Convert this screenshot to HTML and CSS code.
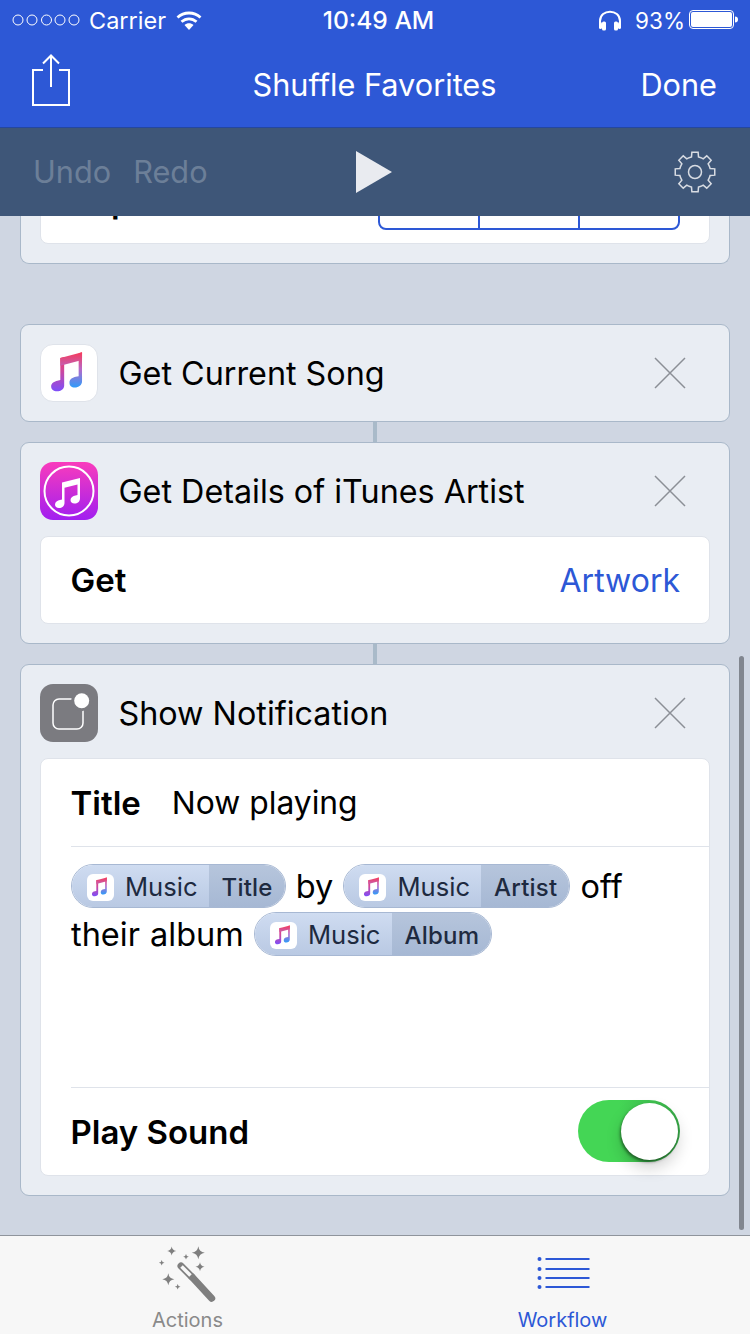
FILE: index.html
```html
<!DOCTYPE html>
<html lang="en">
<head>
<meta charset="utf-8">
<title>Shuffle Favorites</title>
<link rel="stylesheet" href="styles.css">
</head>
<body>
<svg class="defs" width="0" height="0" aria-hidden="true">
  <defs>
    <linearGradient id="noteLeft" gradientUnits="userSpaceOnUse" x1="0" y1="8" x2="0" y2="48"><stop offset="0" stop-color="#fc3650"/><stop offset=".45" stop-color="#d0479a"/><stop offset="1" stop-color="#7d4ffa"/></linearGradient>
    <linearGradient id="noteRight" gradientUnits="userSpaceOnUse" x1="0" y1="6" x2="0" y2="44"><stop offset="0" stop-color="#fc3650"/><stop offset=".5" stop-color="#b868c8"/><stop offset="1" stop-color="#2f9cfa"/></linearGradient>
    <linearGradient id="storeBg" x1="0" y1="0" x2="0" y2="1"><stop offset="0" stop-color="#f93cbc"/><stop offset="1" stop-color="#a11ff0"/></linearGradient>
    <symbol id="note" viewBox="0 0 58 58">
      <path fill="url(#noteLeft)" d="M20 13.5 L24 12.5 V42 C24 46 20.500 48 16.500 48 C13 48 10.500 46 10.500 43 C10.500 39.500 14 37.500 17 37 L20 36.300 Z"/>
      <path fill="url(#noteRight)" d="M39 8.500 L42.500 7.500 V37.500 C42.500 41.500 39 44 35 44 C31.500 44 29.500 41.800 29.500 39 C29.500 35.500 33 33.500 36 33 L39 32.300 Z"/>
      <path fill="url(#noteRight)" d="M20 13.500 L42.500 7.500 V15.500 L20 21.500 Z"/>
    </symbol>
    <path id="star" d="M0 -1 Q.12 -.12 1 0 Q.12 .12 0 1 Q-.12 .12 -1 0 Q-.12 -.12 0 -1 Z"/>
    <path id="tooth" d="M-5.930 -14.320 L-3.490 -15.100 L-3.130 -19.750 H3.130 L3.490 -15.100 L5.930 -14.320"/>
  </defs>
</svg>

<div class="phone">
  <header class="top">
    <div class="status">
      <div class="status-side">
        <svg class="dots" width="68" height="12" viewBox="0 0 68 12"><g fill="none" stroke="#fff" stroke-width="1"><circle cx="6" cy="6" r="5"/><circle cx="20" cy="6" r="5"/><circle cx="34.500" cy="6" r="5"/><circle cx="48" cy="6" r="5"/><circle cx="62" cy="6" r="5"/></g></svg>
        <span class="carrier">Carrier</span>
        <svg class="wifi" width="26" height="19" viewBox="0 0 26 19"><g fill="none" stroke="#fff" stroke-width="2.800"><path d="M1.500 6.500 C8 .5 18 .5 24.500 6.500"/><path d="M5.500 10.800 C10 6.800 16 6.800 20.500 10.800"/></g><path fill="#fff" d="M8.500 14 C11 11.800 15 11.800 17.500 14 L13 19 Z"/></svg>
      </div>
      <div class="time">10:49 AM</div>
      <div class="status-side status-right">
        <svg class="phones" width="24" height="21" viewBox="0 0 24 21"><path fill="none" stroke="#fff" stroke-width="2" d="M2 17 V11 C2 -1.500 22 -1.500 22 11 V17"/><rect x="4" y="11.500" width="4" height="9" rx="1.500" fill="#fff"/><rect x="16" y="11.500" width="4" height="9" rx="1.500" fill="#fff"/><rect x="1" y="12" width="3" height="7" rx="1.500" fill="#fff"/><rect x="20" y="12" width="3" height="7" rx="1.500" fill="#fff"/></svg>
        <span class="battery-text">93%</span>
        <svg class="battery" width="50" height="20" viewBox="0 0 50 20"><rect x=".5" y=".5" width="44" height="18" rx="3.500" fill="none" stroke="#fff"/><rect x="2" y="2" width="41" height="15" rx="2" fill="#fff"/><path fill="#fff" d="M46 6.500 C48 6.500 49 7.500 49 9.500 C49 11.500 48 12.500 46 12.500 Z"/></svg>
      </div>
    </div>
    <nav class="nav">
      <svg class="share" width="38" height="53" viewBox="0 0 38 53"><g fill="none" stroke="#fff" stroke-width="2"><path d="M11 16 H1 V51 H37 V16 H27"/><path d="M19 1.500 V33"/><path d="M11 9.500 L19 1.500 L27 9.500"/></g></svg>
      <div class="nav-title">Shuffle Favorites</div>
      <div class="nav-done">Done</div>
    </nav>
  </header>

  <div class="toolbar">
    <div class="history"><span>Undo</span><span>Redo</span></div>
    <svg class="play" width="36" height="42" viewBox="0 0 36 42"><path fill="#e9ebf0" d="M0 0 L36 21 L0 42 Z"/></svg>
    <svg class="gear" width="42" height="42" viewBox="-21 -21 42 42">
      <g fill="none" stroke="#d8dce3" stroke-width="1.500">
        <circle r="6.500"/>
        <use href="#tooth"/><use href="#tooth" transform="rotate(45)"/><use href="#tooth" transform="rotate(90)"/><use href="#tooth" transform="rotate(135)"/><use href="#tooth" transform="rotate(180)"/><use href="#tooth" transform="rotate(225)"/><use href="#tooth" transform="rotate(270)"/><use href="#tooth" transform="rotate(315)"/>
      </g>
    </svg>
  </div>

  <main class="scroll">
    <div class="flow">
      <section class="card card-clipped">
        <div class="panel">
          <div class="row row-clipped">
            <span class="label">Repeat</span>
            <div class="segments"><i></i><i></i><i></i></div>
          </div>
        </div>
      </section>

      <section class="card card-song">
        <header class="card-head">
          <svg class="app-icon app-music" viewBox="0 0 58 58"><use href="#note"/></svg>
          <h2>Get Current Song</h2>
          <svg class="close" width="32" height="32" viewBox="0 0 32 32"><path d="M1 1 L31 31 M31 1 L1 31"/></svg>
        </header>
      </section>
      <div class="link"></div>

      <section class="card">
        <header class="card-head">
          <svg class="app-icon" viewBox="0 0 58 58"><rect width="58" height="58" rx="13" fill="url(#storeBg)"/><circle cx="29" cy="29" r="24.500" fill="none" stroke="#fff" stroke-width="2"/><path fill="#fff" d="M22 20.500 L40 16 V36.500 C40 39.500 37.500 41.500 34.500 41.500 C32 41.500 30.500 40 30.500 38 C30.500 35.500 33 34 35.500 33.500 L37.500 33 V22.500 L24.500 25.800 V41 C24.500 44 22 46 19 46 C16.500 46 15 44.500 15 42.500 C15 40 17.500 38.500 20 38 L22 37.500 Z"/></svg>
          <h2>Get Details of iTunes Artist</h2>
          <svg class="close" width="32" height="32" viewBox="0 0 32 32"><path d="M1 1 L31 31 M31 1 L1 31"/></svg>
        </header>
        <div class="panel">
          <div class="row">
            <span class="label">Get</span>
            <span class="value">Artwork</span>
          </div>
        </div>
      </section>
      <div class="link"></div>

      <section class="card">
        <header class="card-head">
          <svg class="app-icon" viewBox="0 0 58 58"><rect width="58" height="58" rx="13" fill="#7b7b80"/><rect x="13" y="15" width="30" height="30" rx="6" fill="none" stroke="#fff" stroke-width="1.500"/><circle cx="41.700" cy="16.700" r="10.500" fill="#7b7b80"/><circle cx="41.700" cy="16.700" r="7.500" fill="#fff"/></svg>
          <h2>Show Notification</h2>
          <svg class="close" width="32" height="32" viewBox="0 0 32 32"><path d="M1 1 L31 31 M31 1 L1 31"/></svg>
        </header>
        <div class="panel">
          <div class="row row-title">
            <span class="label">Title</span>
            <span class="text">Now playing</span>
          </div>
          <div class="body-text">
            <span class="pill"><span class="pill-app"><svg class="pill-icon" viewBox="0 0 58 58"><use href="#note"/></svg>Music</span><span class="pill-prop">Title</span></span> by <span class="pill"><span class="pill-app"><svg class="pill-icon" viewBox="0 0 58 58"><use href="#note"/></svg>Music</span><span class="pill-prop">Artist</span></span> off their album <span class="pill"><span class="pill-app"><svg class="pill-icon" viewBox="0 0 58 58"><use href="#note"/></svg>Music</span><span class="pill-prop">Album</span></span>
          </div>
          <div class="row row-sound">
            <span class="label">Play Sound</span>
            <div class="toggle"><div class="knob"></div></div>
          </div>
        </div>
      </section>
    </div>
    <div class="scrollbar"></div>
  </main>

  <footer class="tabs">
    <div class="tab">
      <svg class="tab-icon" width="60" height="60" viewBox="0 0 60 60">
        <g fill="#7f7f7f">
          <use href="#star" transform="translate(13.700 7) scale(4.500)"/>
          <use href="#star" transform="translate(40.300 8.700) scale(6.500)"/>
          <use href="#star" transform="translate(28 12.700) scale(2.800)"/>
          <use href="#star" transform="translate(3.700 18.700) scale(2.800)"/>
          <use href="#star" transform="translate(42 22.700) scale(4.500)"/>
          <use href="#star" transform="translate(10.300 35.300) scale(6)"/>
          <use href="#star" transform="translate(19.700 42.700) scale(2.800)"/>
        </g>
        <path d="M33.700 32.700 L53.700 54.300" stroke="#7f7f7f" stroke-width="7" stroke-linecap="round"/>
        <path d="M23 22 L33.700 32.700" stroke="#7f7f7f" stroke-width="7" stroke-linecap="round"/>
        <path d="M23.500 22.500 L32.500 31.500" stroke="#f7f7f7" stroke-width="3.500"/>
      </svg>
      <span class="tab-label">Actions</span>
    </div>
    <div class="tab tab-active">
      <svg class="tab-icon" width="60" height="60" viewBox="0 0 60 60">
        <g fill="#2d58d6"><circle cx="6.500" cy="15" r="2"/><circle cx="6.500" cy="25" r="2"/><circle cx="6.500" cy="34" r="2"/><circle cx="6.500" cy="43" r="2"/></g>
        <path d="M12.500 15 H56.500 M12.500 25 H56.500 M12.500 34 H56.500 M12.500 43 H56.500" stroke="#2d58d6" stroke-width="2"/>
      </svg>
      <span class="tab-label">Workflow</span>
    </div>
  </footer>
</div>
</body>
</html>
```

FILE: styles.css
```css
* { box-sizing: border-box; }
html, body { margin: 0; padding: 0; }
body { font-family: Inter, "Liberation Sans", sans-serif; color: #000; background: #cfd6e2; }
.defs { display: block; height: 0; }
.phone { width: 750px; height: 1334px; display: flex; flex-direction: column; overflow: hidden; }

.top { background: #2d58d6; color: #fff; border-bottom: 1px solid #24479f; height: 128px; flex: none; }
.status { height: 40px; display: grid; grid-template-columns: 1fr auto 1fr; align-items: center; font-size: 24.600px; padding: 0 11px 0 12px; }
.status-side { display: flex; align-items: center; }
.status-right { justify-content: flex-end; }
.carrier { margin-left: 9px; font-size: 23.500px; }
.wifi { margin-left: 10px; }
.time { font-weight: 500; margin-left: 6px; }
.battery-text { margin-left: 13px; font-size: 22.500px; }
.battery { margin-left: 4px; }
.nav { height: 87px; display: grid; grid-template-columns: 1fr auto 1fr; align-items: center; padding: 2px 33px 0 32px; font-size: 30.700px; }
.share { margin-top: -8px; }
.nav-done { justify-self: end; }

.toolbar { height: 88px; flex: none; background: #3e5678; display: flex; align-items: center; justify-content: space-between; padding: 0 34px; position: relative; }
.history { display: flex; gap: 22px; font-size: 30.700px; color: #6c7f98; margin: -2px 0 0 -1px; }
.play { position: absolute; left: 356px; top: 23px; }

.scroll { flex: 1; min-height: 0; overflow: hidden; position: relative; }
.flow { padding: 0 20px; margin-top: -59px; }
.card { background: #e9edf3; border: 1px solid #a9b8c9; border-radius: 9px; padding: 0 19px 19px; }
.card-clipped { margin-bottom: 60px; border-top: 0; }
.card-song { padding-bottom: 0; }
.card-head { height: 93px; padding-top: 3px; display: flex; align-items: center; }
.card-song .card-head { height: 96px; padding-top: 0; }
.app-icon { width: 58px; height: 58px; flex: none; }
.app-music { background: #fff; border: 1px solid #dfe3ea; border-radius: 13px; }
h2 { margin: 0 0 0 20.500px; font-size: 32.300px; font-weight: 400; flex: 1; }
.close { fill: none; stroke: #8b8f96; stroke-width: 1.500; margin-right: 24px; flex: none; }
.link { width: 4px; height: 20px; background: #a9bac9; margin: 0 auto; }

.panel { background: #fff; border: 1px solid #dfe3ea; border-radius: 8px; }
.row { height: 86px; display: flex; align-items: center; justify-content: space-between; padding: 0 29px 0 30px; font-size: 32px; }
.row-clipped { height: 85px; }
.label { font-weight: 600; font-size: 33px; margin-left: -.5px; }
.value { color: #2d58d6; }
.segments { width: 302px; height: 58px; flex: none; display: flex; border: 2px solid #2d58d6; border-radius: 8px; }
.segments i { flex: 1; border-left: 2px solid #2d58d6; }
.segments i:first-child { border-left: 0; }
.row-title { height: 88px; justify-content: flex-start; gap: 31px; border-bottom: 1px solid #dfe3ea; margin-left: 30px; padding: 0; font-size: 31.800px; }
.body-text { height: 240px; padding: 16px 29px 0 30px; font-size: 32.500px; line-height: 48px; word-spacing: 1px; }
.pill { display: inline-flex; vertical-align: top; height: 44px; margin-top: 1px; border: 1px solid #a7b8d3; border-radius: 22px; overflow: hidden; font-size: 25.600px; line-height: 44px; color: #1e2a40; word-spacing: 0; }
.pill-app { display: flex; align-items: center; padding: 2px 11px 0 15px; background: linear-gradient(#cfdcf1, #b9c9e3); }
.pill-prop { padding: 0 12px 0 13px; background: linear-gradient(#b6c5dc, #a6b8d4); font-weight: 500; font-size: 24px; line-height: 46px; letter-spacing: .2px; }
.pill-icon { width: 27px; height: 27px; background: #fff; border-radius: 6px; margin-right: 11px; }
.row-sound { height: 88px; border-top: 1px solid #dfe3ea; margin-left: 30px; padding: 0 29px 0 0; }
.toggle { width: 102px; height: 62px; border-radius: 31px; background: linear-gradient(90deg, #44d655 40%, #3fc04f 75%, #37a847); position: relative; margin-top: -1px; }
.knob { position: absolute; left: 43px; top: 3px; width: 57px; height: 57px; border-radius: 50%; background: #fff; box-shadow: -1px 2px 3px rgba(0,0,0,.45), 0 8px 16px rgba(0,0,0,.18); }
.scrollbar { position: absolute; left: 739px; top: 440px; width: 5px; height: 574px; border-radius: 3px; background: #81868f; }

.tabs { height: 99px; flex: none; display: grid; grid-template-columns: 1fr 1fr; background: #f7f7f7; border-top: 1px solid #8f949c; }
.tab { display: flex; flex-direction: column; align-items: center; color: #8a8a8a; font-size: 20px; }
.tab-icon { display: block; margin-top: 8px; height: 60px; }
.tab-label { margin-top: 3px; line-height: 26px; }
.tab-active { color: #2d58d6; }
```
